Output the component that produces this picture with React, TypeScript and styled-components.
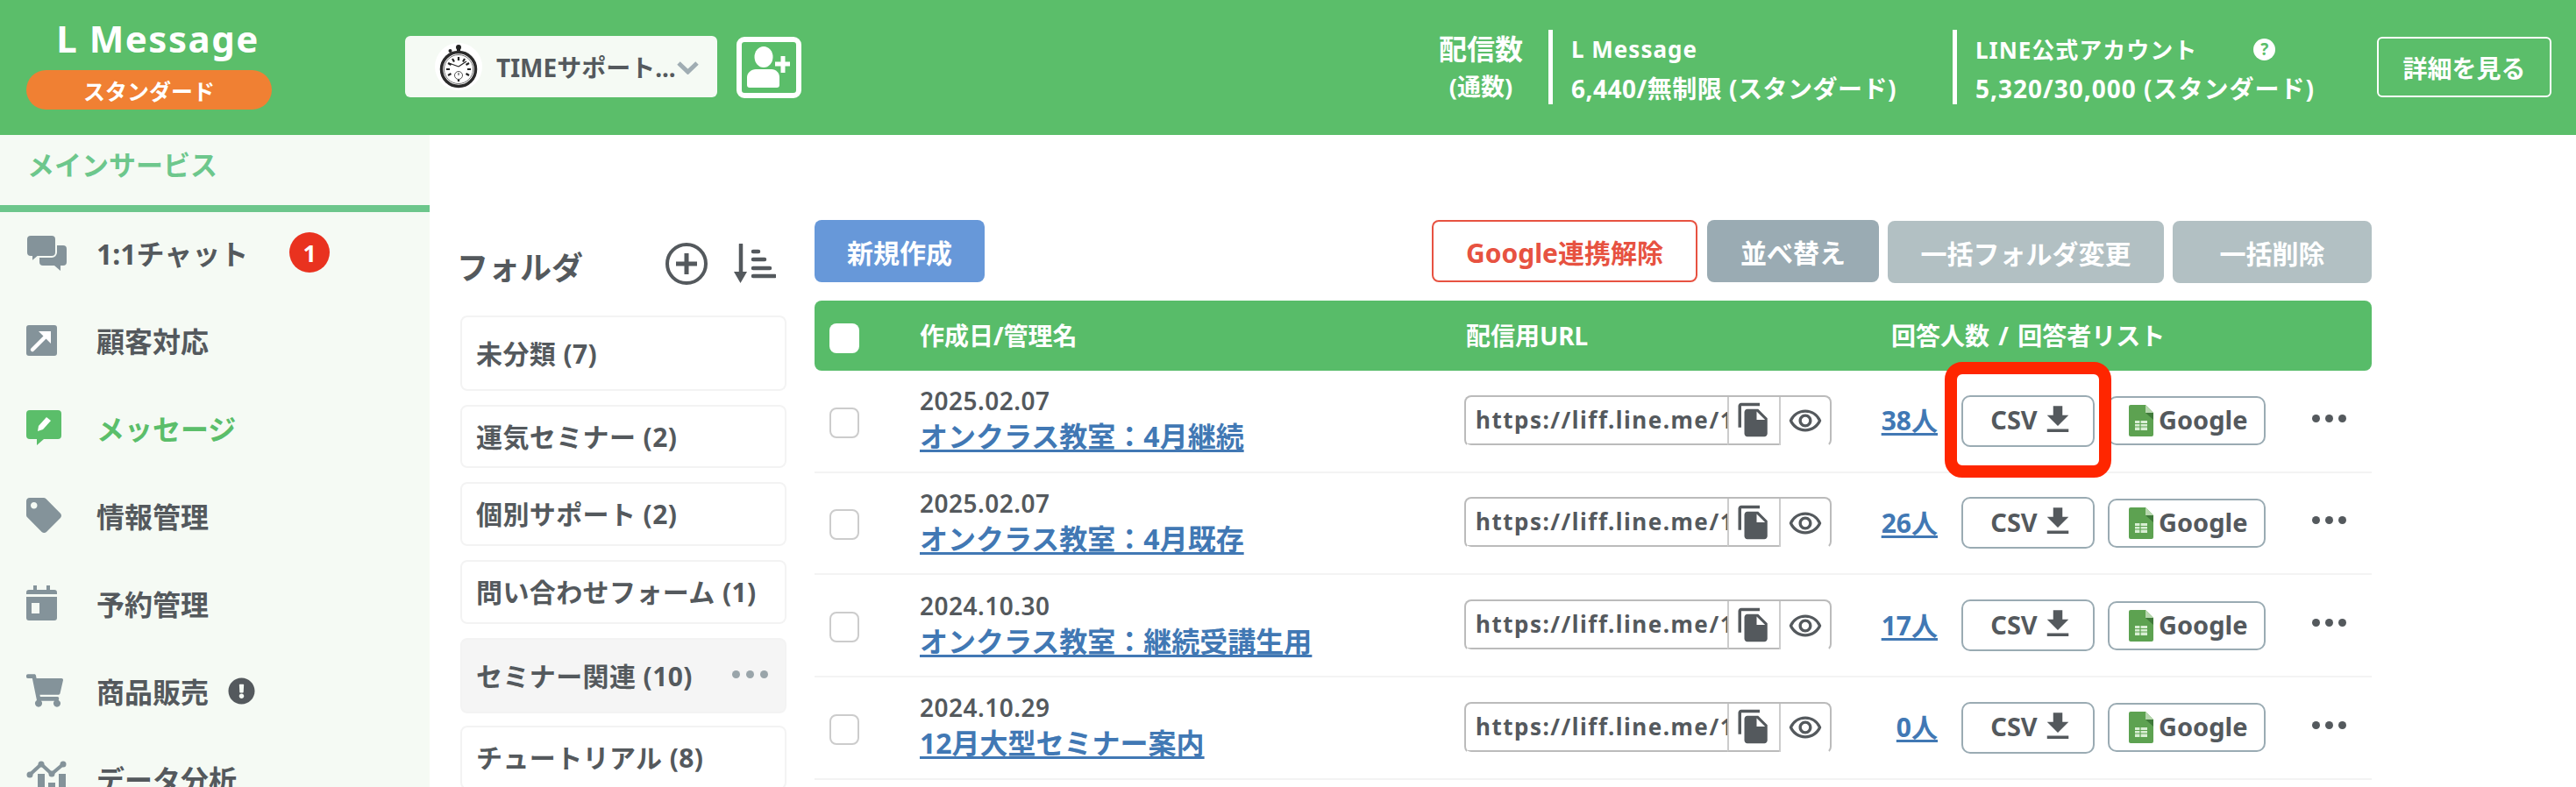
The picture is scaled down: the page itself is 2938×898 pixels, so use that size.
import React from 'react';
import styled, { createGlobalStyle } from 'styled-components';
import { FaTag, FaShoppingCart, FaExclamationCircle } from 'react-icons/fa';
import { MdFileCopy, MdOutlineRemoveRedEye, MdFileDownload } from 'react-icons/md';

const TEXT = '#54595d';
const ICON = '#84939a';
const GREEN = '#5bbe6a';

const GlobalStyle = createGlobalStyle`
  html, body {
    margin: 0;
    padding: 0;
    height: 898px;
    overflow: hidden;
    background: #fff;
    font-family: "Noto Sans", "Noto Sans CJK JP", sans-serif;
    color: ${TEXT};
  }
  * { box-sizing: border-box; }
`;

const Page = styled.div`
  width: 2938px;
  height: 898px;
  overflow: hidden;
  display: flex;
  flex-direction: column;
`;

const Header = styled.header`
  height: 154px;
  flex: none;
  background: #5bbe6a;
  color: #fff;
  display: flex;
  align-items: flex-start;
  padding: 0 28px 0 30px;
`;

const Brand = styled.div`
  width: 280px;
  padding-top: 17px;
  display: flex;
  flex-direction: column;
  align-items: center;
`;

const Logo = styled.div`
  margin-left: 20px;
  font-size: 42px;
  line-height: 54px;
  font-weight: 700;
  letter-spacing: 1.500px;
`;

const PlanBadge = styled.div`
  margin-top: 9px;
  width: 280px;
  height: 45px;
  border-radius: 23px;
  background: #f08033;
  font-size: 25px;
  font-weight: 700;
  display: flex;
  align-items: center;
  justify-content: center;
`;

const AccountSelect = styled.div`
  margin: 41px 0 0 152px;
  width: 356px;
  height: 70px;
  border-radius: 6px;
  background: #f5faf4;
  display: flex;
  align-items: center;
  padding-left: 34px;
  color: ${TEXT};
  font-size: 28px;
  font-weight: 700;
  position: relative;
`;

const AccountName = styled.span`
  margin-left: 16px;
  white-space: nowrap;
`;

const Chevron = styled.svg`
  position: absolute;
  right: 21px;
  top: 29px;
`;

const AddFriend = styled.div`
  margin: 42px 0 0 22px;
  width: 74px;
  height: 70px;
  border: 6px solid #fff;
  border-radius: 9px;
  display: flex;
  align-items: center;
  justify-content: center;
`;

const Stats = styled.div`
  margin: 34px 0 0 auto;
  display: flex;
  align-items: flex-start;
`;

const StatLabel = styled.div`
  width: 126px;
  padding-right: 28px;
  font-weight: 700;
  display: flex;
  flex-direction: column;
  white-space: nowrap;
  align-items: center;
`;

const StatTitle = styled.span`
  font-size: 32px;
  line-height: 44px;
`;

const StatSub = styled.span`
  font-size: 27px;
  line-height: 36px;
  margin-top: 3px;
`;

const StatBlock = styled.div<{ $width: number }>`
  width: ${p => p.$width}px;
  height: 85px;
  border-left: 5px solid #fff;
  padding-left: 21px;
  font-weight: 700;
  white-space: nowrap;
`;

const StatName = styled.div`
  display: flex;
  align-items: center;
  height: 44px;
  font-size: 26px;
  letter-spacing: 1px;
`;

const StatValue = styled.div<{ $spacing: number }>`
  display: flex;
  align-items: center;
  height: 44px;
  font-size: 28px;
  letter-spacing: ${p => p.$spacing}px;
`;

const HelpDot = styled.span`
  margin-left: 64px;
  width: 25px;
  height: 25px;
  border-radius: 50%;
  background: #fff;
  color: ${GREEN};
  font-size: 19px;
  line-height: 25px;
  text-align: center;
  letter-spacing: 0;
`;

const DetailButton = styled.div`
  margin: 8px 0 0 0;
  width: 199px;
  height: 69px;
  border: 2px solid #fff;
  border-radius: 6px;
  font-size: 28px;
  font-weight: 700;
  display: flex;
  align-items: center;
  justify-content: center;
`;

const Body = styled.div`
  flex: 1;
  display: flex;
  min-height: 0;
`;

const Sidebar = styled.aside`
  width: 490px;
  flex: none;
  background: #f5faf4;
  overflow: hidden;
`;

const SideHeading = styled.div`
  height: 88px;
  border-bottom: 8px solid #6cc68b;
  padding: 13px 0 0 31px;
  font-size: 31px;
  line-height: 42px;
  font-weight: 700;
  color: #6dc78c;
`;

const NavList = styled.nav`
  margin-top: -4px;
`;

const NavItem = styled.div<{ $active?: boolean }>`
  height: 100px;
  display: flex;
  align-items: center;
  padding-left: 30px;
  font-size: 32px;
  font-weight: 700;
  color: ${p => (p.$active ? GREEN : TEXT)};
`;

const NavIcon = styled.span`
  width: 80px;
  flex: none;
  display: flex;
  align-items: center;
  color: ${ICON};
`;

const CountBadge = styled.span`
  margin-left: 47px;
  width: 46px;
  height: 46px;
  border-radius: 50%;
  background: #e9321f;
  color: #fff;
  font-size: 27px;
  display: flex;
  align-items: center;
  justify-content: center;
`;

const AlertIcon = styled(FaExclamationCircle)`
  margin-left: 22px;
  font-size: 31px;
  color: ${TEXT};
`;

const FolderColumn = styled.section`
  width: 372px;
  flex: none;
  margin-left: 35px;
  padding-top: 123px;
`;

const FolderHead = styled.div`
  height: 48px;
  display: flex;
  align-items: center;
  margin-bottom: 35px;
`;

const FolderTitle = styled.h2`
  margin: 10px 0 0 -4px;
  font-size: 36px;
  line-height: 48px;
  font-weight: 700;
  color: ${TEXT};
  flex: 1;
`;

const FolderTools = styled.div`
  display: flex;
  gap: 30px;
  margin-right: 12px;
  align-items: center;
`;

const FolderList = styled.div`
  display: flex;
  flex-direction: column;
  gap: 16px;
`;

const FolderCard = styled.div<{ $height: number; $selected?: boolean }>`
  height: ${p => p.$height}px;
  flex: none;
  border: 2px solid #f3f3f3;
  border-radius: 8px;
  background: ${p => (p.$selected ? '#f5f5f5' : '#fff')};
  margin-bottom: ${p => (p.$selected ? '-2px' : '0')};
  padding: 0 19px 3px 16px;
  display: flex;
  align-items: center;
  justify-content: space-between;
  font-size: 30px;
  font-weight: 700;
  letter-spacing: 0.400px;
  white-space: nowrap;
`;

const Dots = styled.span<{ $color: string; $size: number; $gap: number }>`
  display: inline-flex;
  gap: ${p => p.$gap}px;
  i {
    width: ${p => p.$size}px;
    height: ${p => p.$size}px;
    border-radius: 50%;
    background: ${p => p.$color};
  }
`;

const Main = styled.main`
  width: 1776px;
  flex: none;
  margin-left: 32px;
  padding-top: 97px;
`;

const Toolbar = styled.div`
  display: flex;
  align-items: flex-start;
  height: 72px;
  margin-bottom: 20px;
`;

const ToolGroup = styled.div`
  margin-left: auto;
  display: flex;
  gap: 10px;
`;

const ToolButton = styled.div<{ $width: number; $bg: string; $offset?: number }>`
  width: ${p => p.$width}px;
  height: 71px;
  margin-top: ${p => p.$offset || 0}px;
  border-radius: 8px;
  background: ${p => p.$bg};
  color: #fff;
  font-size: 30px;
  font-weight: 700;
  display: flex;
  align-items: center;
  justify-content: center;
  white-space: nowrap;
`;

const OutlineButton = styled(ToolButton)`
  background: #fff;
  border: 2px solid #e75241;
  color: #e75241;
  margin-right: 1px;
`;

const TableHead = styled.div`
  height: 80px;
  padding-bottom: 2px;
  border-radius: 8px;
  background: #58bc69;
  color: #fff;
  display: grid;
  grid-template-columns: 120px 623px 485px 1fr;
  align-items: center;
  font-size: 28px;
  font-weight: 700;
  word-spacing: 3px;
`;

const HeadCheck = styled.span`
  margin: 7px 0 0 17px;
  width: 34px;
  height: 34px;
  background: #fff;
  border-radius: 8px;
`;

const Row = styled.div`
  height: calc(350px / 3);
  border-bottom: 2px solid #f3f3f3;
  display: grid;
  grid-template-columns: 120px 621px 419px 121px 1fr;
  align-items: center;
`;

const RowCheck = styled.span`
  margin: 4px 0 0 17px;
  display: block;
  width: 34px;
  height: 35px;
  border: 2px solid #ccc;
  border-radius: 8px;
  background: #fff;
`;

const NameCell = styled.div`
  display: flex;
  flex-direction: column;
  padding-bottom: 2px;
`;

const DateText = styled.span`
  font-size: 28px;
  line-height: 36px;
  font-weight: 600;
  letter-spacing: 0.500px;
  margin-bottom: 2px;
`;

const LinkText = styled.a`
  font-size: 32px;
  line-height: 42px;
  font-weight: 700;
  color: #4178b4;
  text-decoration: underline;
  text-underline-offset: 3px;
`;

const CountLink = styled(LinkText)`
  font-size: 30px;
`;

const UrlBox = styled.div`
  height: 59px;
  border: 2px solid #bbb;
  border-bottom-color: transparent;
  border-radius: 8px;
  display: flex;
  overflow: hidden;
`;

const UrlText = styled.div`
  width: 298px;
  flex: none;
  padding-left: 11px;
  overflow: hidden;
  white-space: nowrap;
  font-size: 26px;
  line-height: 53px;
  font-weight: 700;
  letter-spacing: 1.500px;
  border-bottom: 2px solid #bbb;
`;

const UrlButton = styled.div<{ $plain?: boolean }>`
  flex: 1;
  display: flex;
  align-items: center;
  justify-content: center;
  color: ${TEXT};
  border-left: 2px solid #ccc;
  ${p => !p.$plain && 'border-bottom: 2px solid #bbb;'}
`;

const CountCell = styled.div`
  text-align: right;
  font-weight: 700;
`;

const Actions = styled.div`
  display: flex;
  align-items: center;
  padding-left: 27px;
`;

const CsvButton = styled.div`
  position: relative;
  width: 152px;
  height: 59px;
  border: 2px solid #9aabb3;
  border-radius: 10px;
  padding: 0 0 3px 12px;
  font-size: 29px;
  font-weight: 700;
  display: flex;
  align-items: center;
  justify-content: center;
  background: #fff;
  svg {
    margin-left: 2px;
  }
`;

const Highlight = styled.div`
  position: absolute;
  top: -40px;
  bottom: -37px;
  left: -21px;
  right: -21px;
  border: 14px solid #ff2600;
  border-radius: 20px;
  pointer-events: none;
  z-index: 2;
`;

const GoogleButton = styled.div`
  width: 180px;
  height: 56px;
  margin-left: 15px;
  border: 2px solid #9aabb3;
  border-radius: 10px;
  font-size: 29px;
  font-weight: 700;
  display: flex;
  align-items: center;
  padding: 0 0 3px 22px;
  gap: 6px;
  background: #fff;
  svg {
    margin-top: 3px;
  }
`;

const RowMore = styled.div`
  margin-left: 53px;
  margin-top: -6px;
  display: flex;
`;

const ChatIcon = () => (
  <svg width="46" height="41" viewBox="0 0 46 41">
    <path fill={ICON} d="M19 12h23a4 4 0 0 1 4 4v15a4 4 0 0 1-4 4h-3v6l-7-6H19a4 4 0 0 1-4-4V16a4 4 0 0 1 4-4z" />
    <path fill={ICON} stroke="#f5faf4" strokeWidth="2" d="M5 0h24a5 5 0 0 1 5 5v15a5 5 0 0 1-5 5H13l-7 6v-6H5a5 5 0 0 1-5-5V5a5 5 0 0 1 5-5z" />
  </svg>
);

const ArrowSquareIcon = () => (
  <svg width="35" height="35" viewBox="0 0 35 35">
    <rect width="35" height="35" rx="3" fill={ICON} />
    <path d="M7 28L25 10" stroke="#fff" strokeWidth="4.5" strokeLinecap="round" />
    <path d="M14 7h14v14z" fill="#fff" />
  </svg>
);

const MessageIcon = () => (
  <svg width="40" height="40" viewBox="0 0 40 40">
    <path fill={GREEN} d="M4 0h32a4 4 0 0 1 4 4v25a4 4 0 0 1-4 4H20l-8 7v-7H4a4 4 0 0 1-4-4V4a4 4 0 0 1 4-4z" />
    <path fill="#fff" d="M13 24l1-6 9-10 5 4-9 10z" />
  </svg>
);

const CalendarIcon = () => (
  <svg width="35" height="40" viewBox="0 0 35 40">
    <path fill={ICON} d="M8 0h4v5h11V0h4v5h5a3 3 0 0 1 3 3v29a3 3 0 0 1-3 3H3a3 3 0 0 1-3-3V8a3 3 0 0 1 3-3h5z" />
    <rect y="10" width="35" height="3" fill="#f5faf4" />
    <rect x="6" y="20" width="9" height="12" fill="#f5faf4" />
  </svg>
);

const ChartIcon = () => (
  <svg width="46" height="40" viewBox="0 0 46 40">
    <path d="M4 16L17 4l12 11L42 4" fill="none" stroke={ICON} strokeWidth="4" />
    <circle cx="4" cy="16" r="3.5" fill={ICON} />
    <circle cx="17" cy="4" r="3.5" fill={ICON} />
    <circle cx="29" cy="15" r="3.5" fill={ICON} />
    <circle cx="42" cy="4" r="3.5" fill={ICON} />
    <rect x="13" y="15" width="8" height="25" fill={ICON} />
    <rect x="37" y="15" width="8" height="25" fill={ICON} />
    <rect x="25" y="25" width="8" height="15" fill={ICON} />
  </svg>
);

const ClockIcon = () => (
  <svg width="54" height="54" viewBox="0 0 54 54">
    <circle cx="27" cy="27" r="27" fill="#fff" />
    <circle cx="27" cy="5" r="3" fill="#222" />
    <circle cx="17.5" cy="9" r="2" fill="#222" />
    <rect x="25" y="6" width="4" height="5" fill="#222" />
    <circle cx="27" cy="30" r="19.5" fill="#fff" stroke="#2a2a2a" strokeWidth="3.5" />
    <circle cx="27" cy="30" r="16.5" fill="none" stroke="#777" strokeWidth="1" />
    <path d="M27 16v4M27 40v4M13 30h4M37 30h4M20 18l2 3.5M34 18l-2 3.5M15 23l3.5 2M39 23l-3.5 2M15 37l3.5-2M39 37l-3.5-2" stroke="#222" strokeWidth="2.2" />
    <path d="M27 27l-11-4M27 27l9-6" stroke="#222" strokeWidth="1.2" />
    <circle cx="27" cy="37" r="4.5" fill="#fff" stroke="#555" strokeWidth="1" />
    <path d="M27 34v3" stroke="#333" strokeWidth="1" />
  </svg>
);

const UserPlusIcon = () => (
  <svg width="50" height="48" viewBox="0 0 50 48">
    <ellipse cx="19" cy="12" rx="10.5" ry="12" fill="#fff" />
    <path d="M0 44V35c0-5 5-9 10-9h18c5 0 9 4 9 9v9a3 3 0 0 1-3 3H3a3 3 0 0 1-3-3z" fill="#fff" />
    <path d="M41 13v19M32 22h17" stroke="#fff" strokeWidth="5" transform="translate(0 -2)" />
  </svg>
);

const PlusCircleIcon = () => (
  <svg width="48" height="48" viewBox="0 0 48 48">
    <circle cx="24" cy="24" r="22" fill="none" stroke={TEXT} strokeWidth="4" />
    <path d="M24 12v24M12 24h24" stroke={TEXT} strokeWidth="5" />
  </svg>
);

const SortIcon = () => (
  <svg width="48" height="46" viewBox="0 0 48 46">
    <path d="M8 1v34" stroke={TEXT} strokeWidth="4.5" strokeLinecap="round" />
    <path d="M0 32h15l-7.500 13z" fill={TEXT} />
    <g stroke={TEXT} strokeWidth="4.500" strokeLinecap="round">
      <path d="M22 9h6M22 18h13M22 28h19M22 37h25" />
    </g>
  </svg>
);

const SheetIcon = () => (
  <svg width="28" height="36" viewBox="0 0 28 36">
    <path d="M2 0h17l9 9v25a2 2 0 0 1-2 2H2a2 2 0 0 1-2-2V2a2 2 0 0 1 2-2z" fill="#5da251" />
    <path d="M19 0l9 9h-9z" fill="#b7d7ae" />
    <path d="M19 9h9v8z" fill="#3f7a3a" />
    <path d="M7 18h14v11H7z" fill="#d8eed3" />
    <path d="M7 21.500h14M7 25h14M13 18v11" stroke="#5da251" strokeWidth="1.200" />
  </svg>
);

const ThreeDots = ({ color, size, gap }: { color: string; size: number; gap: number }) => (
  <Dots $color={color} $size={size} $gap={gap}>
    <i />
    <i />
    <i />
  </Dots>
);

const folders = [
  { name: '未分類 (7)', height: 86 },
  { name: '運気セミナー (2)', height: 72 },
  { name: '個別サポート (2)', height: 73 },
  { name: '問い合わせフォーム (1)', height: 73 },
  { name: 'セミナー関連 (10)', height: 86, selected: true },
  { name: 'チュートリアル (8)', height: 73 },
];

const forms = [
  { date: '2025.02.07', name: 'オンクラス教室：4月継続', count: '38人', highlight: true },
  { date: '2025.02.07', name: 'オンクラス教室：4月既存', count: '26人' },
  { date: '2024.10.30', name: 'オンクラス教室：継続受講生用', count: '17人' },
  { date: '2024.10.29', name: '12月大型セミナー案内', count: '0人' },
];

const App = () => {
  return (
    <Page>
      <GlobalStyle />
      <Header>
        <Brand>
          <Logo>L Message</Logo>
          <PlanBadge>スタンダード</PlanBadge>
        </Brand>
        <AccountSelect>
          <ClockIcon />
          <AccountName>TIMEサポート...</AccountName>
          <Chevron width="25" height="15" viewBox="0 0 25 15">
            <path d="M2 2l10.500 10L23 2" fill="none" stroke="#a0adb3" strokeWidth="5" />
          </Chevron>
        </AccountSelect>
        <AddFriend>
          <UserPlusIcon />
        </AddFriend>
        <Stats>
          <StatLabel>
            <StatTitle>配信数</StatTitle>
            <StatSub>(通数)</StatSub>
          </StatLabel>
          <StatBlock $width={461}>
            <StatName>L Message</StatName>
            <StatValue $spacing={0.5}>6,440/無制限 (スタンダード)</StatValue>
          </StatBlock>
          <StatBlock $width={484}>
            <StatName>
              LINE公式アカウント
              <HelpDot>?</HelpDot>
            </StatName>
            <StatValue $spacing={1}>5,320/30,000 (スタンダード)</StatValue>
          </StatBlock>
          <DetailButton>詳細を見る</DetailButton>
        </Stats>
      </Header>
      <Body>
        <Sidebar>
          <SideHeading>メインサービス</SideHeading>
          <NavList>
            <NavItem>
              <NavIcon><ChatIcon /></NavIcon>
              1:1チャット
              <CountBadge>1</CountBadge>
            </NavItem>
            <NavItem>
              <NavIcon><ArrowSquareIcon /></NavIcon>
              顧客対応
            </NavItem>
            <NavItem $active>
              <NavIcon><MessageIcon /></NavIcon>
              メッセージ
            </NavItem>
            <NavItem>
              <NavIcon><FaTag size={40} /></NavIcon>
              情報管理
            </NavItem>
            <NavItem>
              <NavIcon><CalendarIcon /></NavIcon>
              予約管理
            </NavItem>
            <NavItem>
              <NavIcon><FaShoppingCart size={42} /></NavIcon>
              商品販売
              <AlertIcon />
            </NavItem>
            <NavItem>
              <NavIcon><ChartIcon /></NavIcon>
              データ分析
            </NavItem>
          </NavList>
        </Sidebar>

        <FolderColumn>
          <FolderHead>
            <FolderTitle>フォルダ</FolderTitle>
            <FolderTools>
              <PlusCircleIcon />
              <SortIcon />
            </FolderTools>
          </FolderHead>
          <FolderList>
            {folders.map(folder => (
              <FolderCard key={folder.name} $height={folder.height} $selected={folder.selected}>
                {folder.name}
                {folder.selected && <ThreeDots color="#9aa5aa" size={9} gap={7} />}
              </FolderCard>
            ))}
          </FolderList>
        </FolderColumn>

        <Main>
          <Toolbar>
            <ToolButton $width={194} $bg="#6798d9">新規作成</ToolButton>
            <ToolGroup>
              <OutlineButton $width={303} $bg="#fff">Google連携解除</OutlineButton>
              <ToolButton $width={196} $bg="#9aabb3">並べ替え</ToolButton>
              <ToolButton $width={315} $bg="#b2c0c3" $offset={1}>一括フォルダ変更</ToolButton>
              <ToolButton $width={227} $bg="#b2c0c3" $offset={1}>一括削除</ToolButton>
            </ToolGroup>
          </Toolbar>
          <TableHead>
            <HeadCheck />
            <span>作成日/管理名</span>
            <span>配信用URL</span>
            <span>回答人数 / 回答者リスト</span>
          </TableHead>
          {forms.map(form => (
            <Row key={form.name}>
              <RowCheck />
              <NameCell>
                <DateText>{form.date}</DateText>
                <div><LinkText>{form.name}</LinkText></div>
              </NameCell>
              <UrlBox>
                <UrlText>https://liff.line.me/1</UrlText>
                <UrlButton><MdFileCopy size={42} /></UrlButton>
                <UrlButton $plain><MdOutlineRemoveRedEye size={40} /></UrlButton>
              </UrlBox>
              <CountCell><CountLink>{form.count}</CountLink></CountCell>
              <Actions>
                <CsvButton>
                  CSV
                  <MdFileDownload size={42} />
                  {form.highlight && <Highlight />}
                </CsvButton>
                <GoogleButton>
                  <SheetIcon />
                  Google
                </GoogleButton>
                <RowMore>
                  <ThreeDots color={TEXT} size={9} gap={6} />
                </RowMore>
              </Actions>
            </Row>
          ))}
        </Main>
      </Body>
    </Page>
  );
};

export default App;
